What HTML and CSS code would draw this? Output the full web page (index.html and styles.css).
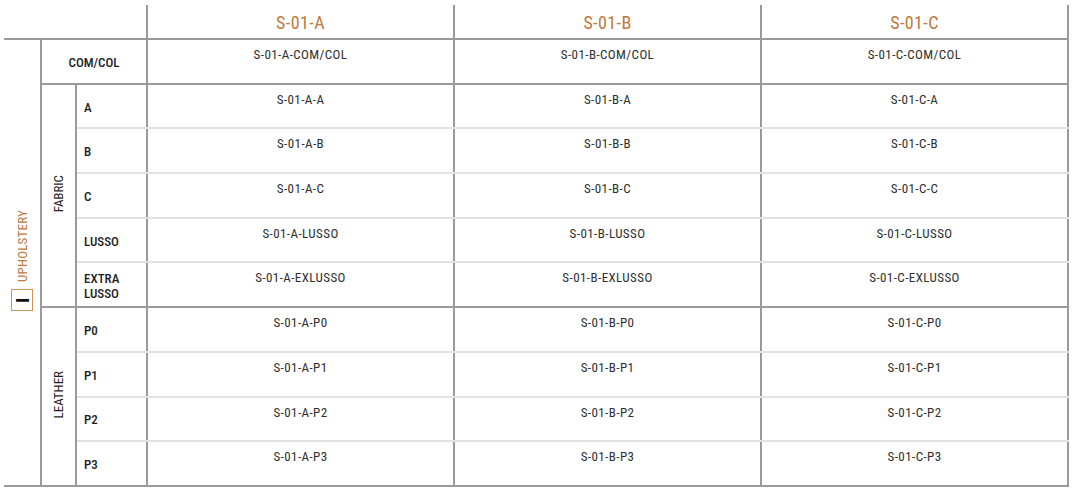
FILE: index.html
```html
<!DOCTYPE html>
<html>
<head>
<meta charset="utf-8">
<link rel="stylesheet" href="styles.css">
</head>
<body>
<table class="spec">
  <colgroup>
    <col class="c-group"><col class="c-sub"><col class="c-label">
    <col class="c-data"><col class="c-data"><col class="c-data">
  </colgroup>
  <thead>
    <tr class="head">
      <th colspan="3" class="corner"></th>
      <th class="col-h">S-01-A</th>
      <th class="col-h">S-01-B</th>
      <th class="col-h">S-01-C</th>
    </tr>
  </thead>
  <tbody>
    <tr class="row dark">
      <td rowspan="10" class="group"><div class="vlabel group-label"><span class="num">I</span><span class="gtext">UPHOLSTERY</span></div></td>
      <td colspan="2" class="label center">COM/COL</td>
      <td class="cell">S-01-A-COM/COL</td><td class="cell">S-01-B-COM/COL</td><td class="cell">S-01-C-COM/COL</td>
    </tr>
    <tr class="row light">
      <td rowspan="5" class="sub"><div class="vlabel">FABRIC</div></td>
      <td class="label">A</td>
      <td class="cell">S-01-A-A</td><td class="cell">S-01-B-A</td><td class="cell">S-01-C-A</td>
    </tr>
    <tr class="row light">
      <td class="label">B</td>
      <td class="cell">S-01-A-B</td><td class="cell">S-01-B-B</td><td class="cell">S-01-C-B</td>
    </tr>
    <tr class="row light">
      <td class="label">C</td>
      <td class="cell">S-01-A-C</td><td class="cell">S-01-B-C</td><td class="cell">S-01-C-C</td>
    </tr>
    <tr class="row light">
      <td class="label">LUSSO</td>
      <td class="cell">S-01-A-LUSSO</td><td class="cell">S-01-B-LUSSO</td><td class="cell">S-01-C-LUSSO</td>
    </tr>
    <tr class="row dark">
      <td class="label">EXTRA<br>LUSSO</td>
      <td class="cell">S-01-A-EXLUSSO</td><td class="cell">S-01-B-EXLUSSO</td><td class="cell">S-01-C-EXLUSSO</td>
    </tr>
    <tr class="row light">
      <td rowspan="4" class="sub"><div class="vlabel">LEATHER</div></td>
      <td class="label">P0</td>
      <td class="cell">S-01-A-P0</td><td class="cell">S-01-B-P0</td><td class="cell">S-01-C-P0</td>
    </tr>
    <tr class="row light">
      <td class="label">P1</td>
      <td class="cell">S-01-A-P1</td><td class="cell">S-01-B-P1</td><td class="cell">S-01-C-P1</td>
    </tr>
    <tr class="row light">
      <td class="label">P2</td>
      <td class="cell">S-01-A-P2</td><td class="cell">S-01-B-P2</td><td class="cell">S-01-C-P2</td>
    </tr>
    <tr class="row dark">
      <td class="label">P3</td>
      <td class="cell">S-01-A-P3</td><td class="cell">S-01-B-P3</td><td class="cell">S-01-C-P3</td>
    </tr>
  </tbody>
</table>
</body>
</html>
```
FILE: styles.css
```css
html, body { background: #fff; }
body {
  margin: 5px 0 0 4px;
  font-family: Roboto, "Liberation Sans", Arial, sans-serif;
  font-stretch: 75%;
  color: #2e2e2e;
}
.spec {
  border-collapse: collapse;
  table-layout: fixed;
  width: 1064px;
  font-size: 13px;
  line-height: 15px;
}
.c-group { width: 37px; }
.c-sub { width: 35px; }
.c-label { width: 71px; }
.c-data { width: 307px; }

.head { height: 34px; }
.corner { border-bottom: 2px solid #9a9a9a; padding: 0; }
.col-h {
  border-left: 2px solid #9a9a9a;
  border-right: 2px solid #9a9a9a;
  border-bottom: 2px solid #9a9a9a;
  color: #c0783a;
  font-size: 18px;
  font-weight: normal;
  letter-spacing: 0.4px;
  padding: 2px 0 0;
  vertical-align: middle;
  text-align: center;
}
.row { height: 44.7px; }
td { padding: 0; }
.group, .sub {
  border-right: 2px solid #9a9a9a;
  border-bottom: 2px solid #9a9a9a;
  text-align: center;
  vertical-align: middle;
}
.label {
  border-right: 2px solid #9a9a9a;
  color: #1e1e1e;
  font-weight: 500;
  padding: 2px 0 0 7px;
  vertical-align: middle;
  text-align: left;
}
.label.center { text-align: center; padding-left: 0; }
.cell {
  border-right: 2px solid #9a9a9a;
  letter-spacing: 0.42px;
  text-align: center;
  vertical-align: top;
  padding-top: 7px;
}
.light .label, .light .cell { border-bottom: 2px solid #e2e2e2; }
.dark .label, .dark .cell { border-bottom: 2px solid #9a9a9a; }

.vlabel {
  display: inline-flex;
  align-items: center;
  writing-mode: vertical-rl;
  transform: rotate(180deg);
  color: #1e1e1e;
  font-weight: 400;
}
.group-label { gap: 7px; color: #c0783a; font-weight: 400; }
.num {
  display: inline-flex;
  align-items: center;
  justify-content: center;
  width: 20px;
  height: 20px;
  border: 1.5px solid #d09258;
  color: #111;
  font-size: 19px;
  font-weight: bold;
  line-height: 1;
}
.gtext { font-size: 13px; letter-spacing: 0.2px; }
```
